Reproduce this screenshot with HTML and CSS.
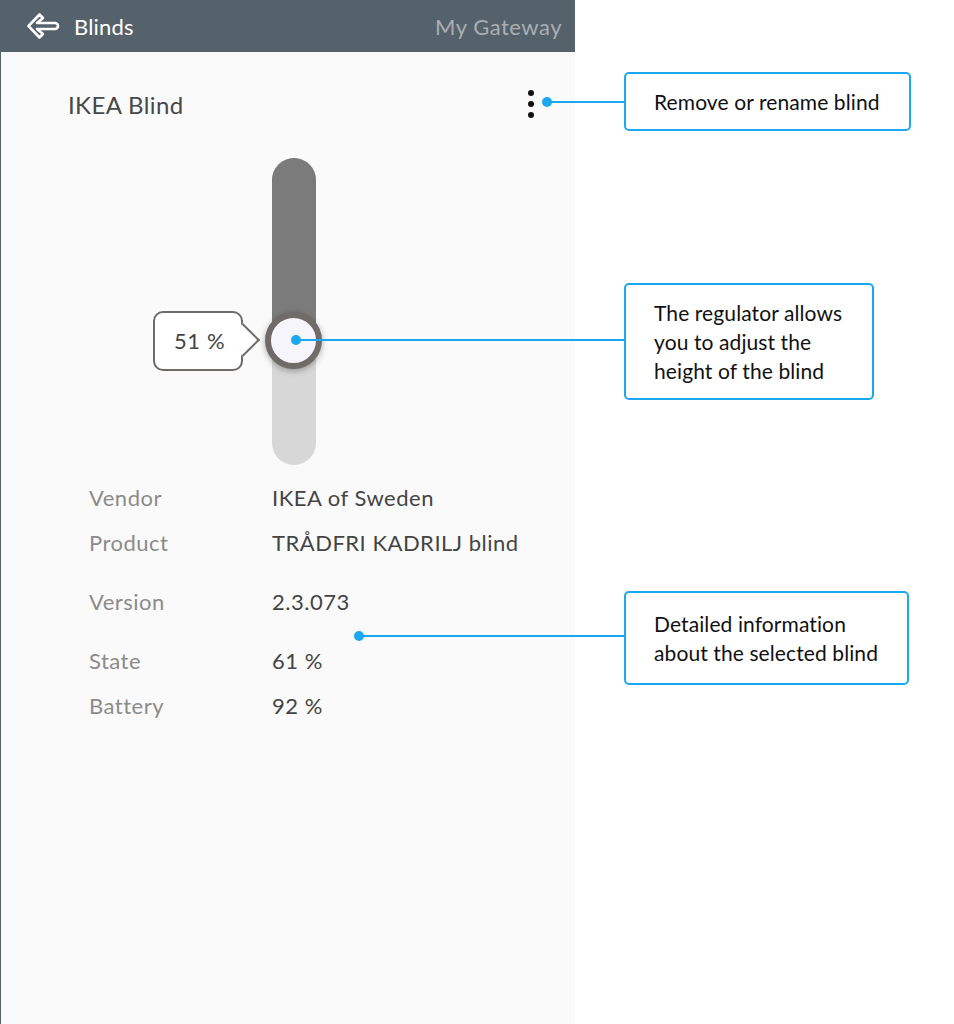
FILE: index.html
```html
<!DOCTYPE html>
<html lang="en">
<head>
    <meta charset="UTF-8">
    <meta name="viewport" content="width=device-width, initial-scale=1.0">
    <title>Blinds - IKEA Blind</title>
    <link rel="stylesheet" href="styles.css">
</head>
<body>
    <div class="page">
        <div class="screen">
            <div class="topbar">
                <svg class="back-icon" width="34" height="32" viewBox="0 0 34 32">
                    <path d="M2.5 16 L13.5 4.5 L17 8 L11 13 L29 13 A3 3 0 0 1 29 19 L11 19 L17 24 L13.5 27.5 Z"
                          fill="none" stroke="#fff" stroke-width="2.6" stroke-linejoin="round"/>
                </svg>
                <span class="topbar-title">Blinds</span>
                <span class="topbar-gateway">My Gateway</span>
            </div>

            <div class="device-head">
                <span class="device-name">IKEA Blind</span>
                <div class="kebab">
                    <span></span><span></span><span></span>
                </div>
            </div>

            <div class="slider">
                <div class="track">
                    <div class="track-fill"></div>
                </div>
                <div class="thumb"></div>
                <div class="bubble">51 %</div>
            </div>

            <div class="details">
                <div class="group">
                    <div class="label">Vendor</div><div class="value">IKEA of Sweden</div>
                    <div class="label">Product</div><div class="value">TRÅDFRI KADRILJ blind</div>
                </div>
                <div class="group">
                    <div class="label">Version</div><div class="value">2.3.073</div>
                </div>
                <div class="group">
                    <div class="label">State</div><div class="value">61 %</div>
                    <div class="label">Battery</div><div class="value">92 %</div>
                </div>
            </div>
        </div>

        <!-- annotations -->
        <div class="pointer pointer-menu"></div>
        <div class="pointer pointer-slider"></div>
        <div class="pointer pointer-details"></div>

        <div class="note note-menu">Remove or rename blind</div>
        <div class="note note-slider">The regulator allows you to adjust the height of the blind</div>
        <div class="note note-details">Detailed information about the selected blind</div>
    </div>
</body>
</html>
```

FILE: styles.css
```css
body {
    margin: 0;
    background-color: #fff;
    font-family: Lato, "Open Sans", sans-serif;
}

.page {
    position: relative;
    width: 954px;
    height: 1024px;
    overflow: hidden;
}

.screen {
    box-sizing: border-box;
    width: 575px;
    height: 1024px;
    background-color: #fafafa;
    border-left: 1px solid #56626b;
}

.topbar {
    height: 52px;
    background-color: #56626b;
    display: flex;
    align-items: center;
    padding: 0 13px 0 25px;
}

.back-icon {
    display: block;
}

.topbar-title {
    margin-left: 14px;
    font-size: 22px;
    letter-spacing: 0.2px;
    color: #fff;
}

.topbar-gateway {
    margin-left: auto;
    font-size: 22px;
    letter-spacing: 0.5px;
    color: #a9aeb3;
}

.device-head {
    display: flex;
    align-items: center;
    justify-content: space-between;
    height: 28px;
    margin-top: 38px;
    padding: 0 40px 0 67px;
}

.device-name {
    font-size: 24px;
    letter-spacing: 0.4px;
    color: #484848;
}

.kebab {
    display: flex;
    flex-direction: column;
    gap: 5px;
    margin-right: 1px;
}

.kebab span {
    width: 6px;
    height: 6px;
    border-radius: 50%;
    background-color: #111;
}

.slider {
    position: relative;
    height: 307px;
    margin-top: 40px;
}

.track {
    width: 44px;
    height: 307px;
    margin-left: 271px;
    border-radius: 22px;
    background-color: #d7d7d7;
    overflow: hidden;
}

.track-fill {
    height: 182px;
    background-color: #7b7b7b;
}

.thumb {
    position: absolute;
    left: 264px;
    top: 154px;
    box-sizing: border-box;
    width: 57px;
    height: 57px;
    border-radius: 50%;
    border: 6px solid #6f6b69;
    background-color: #f5f5fb;
    box-shadow: 0 2px 6px rgba(0, 0, 0, 0.3);
}

.bubble {
    position: absolute;
    left: 152px;
    top: 153px;
    box-sizing: border-box;
    width: 90px;
    height: 60px;
    border: 2px solid #6f6b69;
    border-radius: 10px;
    background-color: #fff;
    padding-left: 19px;
    line-height: 56px;
    font-size: 22px;
    letter-spacing: 0.6px;
    color: #444;
}

.bubble::after {
    content: "";
    position: absolute;
    right: -14px;
    top: 15px;
    width: 22px;
    height: 22px;
    background-color: #fff;
    border-top: 2px solid #6f6b69;
    border-right: 2px solid #6f6b69;
    transform: rotate(45deg);
}

.details {
    margin-top: 10px;
    padding-left: 88px;
}

.group {
    display: grid;
    grid-template-columns: 183px auto;
    grid-auto-rows: 45px;
    align-items: center;
    margin-bottom: 14px;
    font-size: 22px;
    letter-spacing: 0.5px;
}

.label {
    color: #8b8b8b;
}

.value {
    color: #444;
}

/* annotation lines and boxes */
.pointer {
    position: absolute;
    height: 2px;
    background-color: #1ba8f0;
}

.pointer::before {
    content: "";
    position: absolute;
    left: -4px;
    top: -4px;
    width: 10px;
    height: 10px;
    border-radius: 50%;
    background-color: #1ba8f0;
}

.pointer-menu {
    left: 546px;
    top: 101px;
    width: 80px;
}

.pointer-slider {
    left: 295px;
    top: 339px;
    width: 331px;
}

.pointer-details {
    left: 358px;
    top: 635px;
    width: 268px;
}

.note {
    position: absolute;
    left: 624px;
    box-sizing: border-box;
    display: flex;
    align-items: center;
    padding: 0 10px 0 28px;
    border: 2px solid #1ba8f0;
    border-radius: 5px;
    background-color: #fff;
    font-size: 21px;
    letter-spacing: 0.1px;
    line-height: 29px;
    color: #111;
}

.note-menu {
    top: 72px;
    width: 287px;
    height: 59px;
}

.note-slider {
    top: 283px;
    width: 250px;
    height: 117px;
}

.note-details {
    top: 591px;
    width: 285px;
    height: 94px;
}
```
